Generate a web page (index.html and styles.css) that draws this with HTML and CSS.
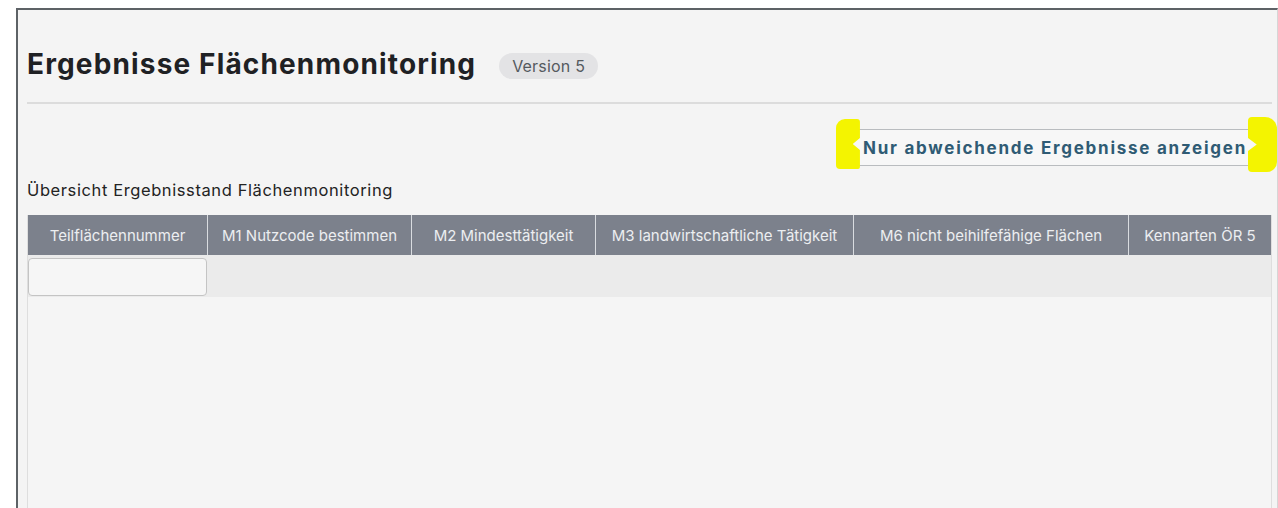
FILE: index.html
```html
<!DOCTYPE html>
<html lang="de">
<head>
<meta charset="utf-8">
<title>Ergebnisse Flächenmonitoring</title>
<link rel="stylesheet" href="styles.css">
</head>
<body>
<div class="frame">
  <div class="title-row">
    <h1 class="title">Ergebnisse Flächenmonitoring</h1>
    <span class="badge">Version 5</span>
  </div>
  <hr class="divider">
  <div class="toolbar">
    <button class="btn-filter" type="button">
      <span class="mark mark-left"></span>
      <span class="btn-label">Nur abweichende Ergebnisse anzeigen</span>
      <span class="mark mark-right"></span>
    </button>
  </div>
  <p class="subtitle">Übersicht Ergebnisstand Flächenmonitoring</p>
  <div class="table">
    <div class="thead">
      <div class="th c1">Teilflächennummer</div>
      <div class="th c2">M1 Nutzcode bestimmen</div>
      <div class="th c3">M2 Mindesttätigkeit</div>
      <div class="th c4">M3 landwirtschaftliche Tätigkeit</div>
      <div class="th c5">M6 nicht beihilfefähige Flächen</div>
      <div class="th c6">Kennarten ÖR 5</div>
    </div>
    <div class="filter-row">
      <input class="filter-input" type="text">
    </div>
    <div class="tbody"></div>
  </div>
</div>
</body>
</html>
```
FILE: styles.css
```css
* { box-sizing: border-box; }

html, body {
  margin: 0;
  background: #ffffff;
  height: 100%;
  overflow: hidden;
}

body {
  font-family: Inter, "Noto Sans", "Liberation Sans", sans-serif;
  color: #222;
}

.frame {
  display: flex;
  flex-direction: column;
  margin: 8px 0 0 16px;
  height: calc(100% - 8px);
  background: #f4f4f4;
  border-top: 2px solid #5d6266;
  border-left: 2px solid #5d6266;
  border-right: 1px solid #d6d6d6;
  padding: 34px 5px 0 9px;
}

.title-row {
  display: flex;
  align-items: center;
  gap: 23px;
  height: 40px;
}

.title {
  margin: 0;
  font-size: 28px;
  font-weight: 700;
  letter-spacing: 1.15px;
  color: #1f2124;
}

.badge {
  background: #e3e3e5;
  color: #555a5f;
  font-size: 16px;
  letter-spacing: 0.2px;
  border-radius: 13px;
  padding: 4px 13px;
  line-height: 18px;
  margin-top: 4px;
}

.divider {
  margin: 18px 0 0 0;
  border: 0;
  border-top: 2px solid #dcdcdc;
}

.toolbar {
  display: flex;
  justify-content: flex-end;
  margin-top: 25px;
}

.btn-filter {
  position: relative;
  height: 37px;
  padding: 0 24px 0 25px;
  background: #f7f7f7;
  border: 1px solid #b9bcbf;
  border-radius: 3px;
  font-family: Inter, "Noto Sans", "Liberation Sans", sans-serif;
  font-size: 17px;
  font-weight: 700;
  letter-spacing: 1.75px;
  color: #2f5b74;
}

.btn-label {
  position: relative;
  z-index: 1;
}

/* highlighter marks on both ends of the button */
.mark {
  position: absolute;
  background: #f4f400;
}

.mark-left {
  left: -2px;
  top: -11px;
  width: 24px;
  height: 50px;
  border-radius: 9px 3px 2px 4px;
  clip-path: polygon(0 0, 100% 0, 100% 38%, 70% 50%, 100% 62%, 100% 100%, 0 100%);
}

.mark-right {
  right: -6px;
  top: -13px;
  width: 29px;
  height: 55px;
  border-radius: 4px 12px 10px 4px;
  clip-path: polygon(0 0, 100% 0, 100% 100%, 0 100%, 0 62%, 30% 50%, 0 38%);
}

.subtitle {
  margin: 14px 0 0 0;
  font-size: 16.5px;
  letter-spacing: 0.6px;
  line-height: 20px;
  color: #232323;
}

.table {
  flex: 1;
  display: flex;
  flex-direction: column;
  margin-top: 15px;
  border-left: 1px solid #dedede;
  border-right: 1px solid #dedede;
}

.thead {
  display: grid;
  grid-template-columns: 179px 204px 184px 258px 275px 1fr;
  background: #7c818c;
  height: 40px;
}

.th {
  display: flex;
  align-items: center;
  justify-content: center;
  color: #eceef1;
  font-size: 15px;
  white-space: nowrap;
  border-left: 1px solid #d9dce0;
}

.th.c1 { border-left: 0; }

.filter-row {
  background: #ebebeb;
  height: 42px;
  padding-top: 3px;
}

.filter-input {
  display: block;
  width: 179px;
  height: 38px;
  margin: 0;
  background: #f6f6f6;
  border: 1px solid #c4c4c4;
  border-radius: 4px;
}

.tbody {
  flex: 1;
  background: #f5f5f5;
}
```
